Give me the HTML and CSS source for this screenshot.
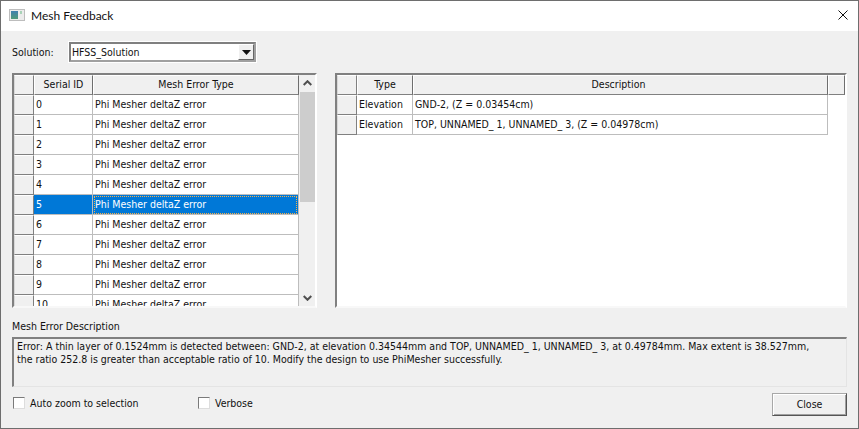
FILE: index.html
```html
<!DOCTYPE html>
<html lang="en">
<head>
<meta charset="utf-8">
<title>Mesh Feedback</title>
<link rel="stylesheet" href="styles.css">
</head>
<body>
<div class="window">
  <header class="titlebar">
    <svg class="app-icon" width="16" height="16" viewBox="0 0 16 16"><defs><linearGradient id="ig" x1="0" y1="0" x2="0" y2="1"><stop offset="0" stop-color="#3f7fb0"/><stop offset="1" stop-color="#4f9a78"/></linearGradient></defs><rect x="0.5" y="2.5" width="15" height="11" fill="#ececec" stroke="#bdbdbd"/><rect x="2" y="4" width="7" height="8" fill="url(#ig)"/><rect x="11" y="4" width="2" height="3" fill="#a9d3b8"/></svg>
    <span class="title">Mesh Feedback</span>
    <svg class="close-x" width="10" height="10" viewBox="0 0 10 10"><path d="M0.5 0.5 9.5 9.5M9.5 0.5 0.5 9.5" stroke="#111" stroke-width="1" fill="none"/></svg>
  </header>
  <main class="content">
    <div class="solution-row">
      <label class="solution-label">Solution:</label>
      <div class="combo"><span class="combo-text">HFSS_Solution</span><span class="combo-btn"><svg width="9" height="5" viewBox="0 0 9 5"><path d="M0 0H9L4.5 5Z" fill="#111"/></svg></span></div>
    </div>
    <div class="grids">
      <div class="grid-frame left-frame">
        <div class="grid-body">
          <div class="row head">
            <div class="rh"></div><div class="hc c-id">Serial ID</div><div class="hc c-type">Mesh Error Type</div>
          </div>
          <div class="row"><div class="rh"></div><div class="td c-id">0</div><div class="td c-type">Phi Mesher deltaZ error</div></div>
          <div class="row"><div class="rh"></div><div class="td c-id">1</div><div class="td c-type">Phi Mesher deltaZ error</div></div>
          <div class="row"><div class="rh"></div><div class="td c-id">2</div><div class="td c-type">Phi Mesher deltaZ error</div></div>
          <div class="row"><div class="rh"></div><div class="td c-id">3</div><div class="td c-type">Phi Mesher deltaZ error</div></div>
          <div class="row"><div class="rh"></div><div class="td c-id">4</div><div class="td c-type">Phi Mesher deltaZ error</div></div>
          <div class="row selected"><div class="rh"></div><div class="td c-id">5</div><div class="td c-type"><span class="focus">Phi Mesher deltaZ error</span></div></div>
          <div class="row"><div class="rh"></div><div class="td c-id">6</div><div class="td c-type">Phi Mesher deltaZ error</div></div>
          <div class="row"><div class="rh"></div><div class="td c-id">7</div><div class="td c-type">Phi Mesher deltaZ error</div></div>
          <div class="row"><div class="rh"></div><div class="td c-id">8</div><div class="td c-type">Phi Mesher deltaZ error</div></div>
          <div class="row"><div class="rh"></div><div class="td c-id">9</div><div class="td c-type">Phi Mesher deltaZ error</div></div>
          <div class="row"><div class="rh"></div><div class="td c-id">10</div><div class="td c-type">Phi Mesher deltaZ error</div></div>
        </div>
        <div class="scrollbar">
          <svg class="arrow" width="9" height="6" viewBox="0 0 9 6"><path d="M0.7 5 4.5 1.2 8.3 5" stroke="#505050" stroke-width="2" fill="none"/></svg>
          <div class="track"><div class="thumb"></div></div>
          <svg class="arrow" width="9" height="6" viewBox="0 0 9 6"><path d="M0.7 1 4.5 4.8 8.3 1" stroke="#505050" stroke-width="2" fill="none"/></svg>
        </div>
      </div>
      <div class="grid-frame right-frame">
        <div class="grid-body">
          <div class="row head">
            <div class="rh"></div><div class="hc c-kind">Type</div><div class="hc c-desc head-desc">Description</div><div class="hc c-end"></div>
          </div>
          <div class="row"><div class="rh"></div><div class="td c-kind">Elevation</div><div class="td c-desc">GND-2, (Z = 0.03454cm)</div></div>
          <div class="row"><div class="rh"></div><div class="td c-kind">Elevation</div><div class="td c-desc">TOP, UNNAMED_ 1, UNNAMED_ 3, (Z = 0.04978cm)</div></div>
        </div>
      </div>
    </div>
    <div class="desc-label">Mesh Error Description</div>
    <div class="desc-box">Error: A thin layer of 0.1524mm is detected between: GND-2, at elevation 0.34544mm and TOP, UNNAMED_ 1, UNNAMED_ 3, at 0.49784mm. Max extent is 38.527mm,<br>the ratio 252.8 is greater than acceptable ratio of 10. Modify the design to use PhiMesher successfully.</div>
    <div class="footer">
      <div class="check check-auto"><span class="box"></span><span>Auto zoom to selection</span></div>
      <div class="check"><span class="box"></span><span>Verbose</span></div>
      <button class="close-btn" type="button">Close</button>
    </div>
  </main>
</div>
</body>
</html>
```

FILE: styles.css
```css
* { box-sizing: border-box; }
html, body { margin: 0; padding: 0; }
body {
  width: 859px;
  height: 429px;
  overflow: hidden;
  font-family: "DejaVu Sans Condensed", "DejaVu Sans", sans-serif;
  font-stretch: condensed;
  font-size: 10.5px;
  color: #111;
}
.window {
  width: 859px;
  height: 429px;
  border: 1px solid #6e6e6e;
  display: flex;
  flex-direction: column;
  background: #f0f0f0;
}
.titlebar {
  height: 30px;
  flex: none;
  background: #fff;
  display: flex;
  align-items: center;
  padding: 0 10px 2px 8px;
}
.app-icon { flex: none; margin-right: 6px; }
.title { font-family: "Lato", "Noto Sans", sans-serif; font-stretch: normal; font-size: 12px; flex: 1; padding-top: 1px; }
.content {
  flex: 1;
  padding: 11px 11px 0 11px;
  display: flex;
  flex-direction: column;
  min-height: 0;
}
.solution-row { display: flex; align-items: center; height: 20px; }
.solution-label { width: 57px; }
.combo {
  width: 187px;
  height: 20px;
  background: #fff;
  border: 2px solid;
  border-color: #808080 #a0a0a0 #a0a0a0 #808080;
  outline: 1px solid #fff;
  display: flex;
  align-items: center;
  padding-left: 1px;
}
.combo-text { flex: 1; }
.combo-btn {
  width: 16px;
  height: 16px;
  background: #f0f0f0;
  border: 1px solid;
  border-color: #fff #666 #666 #fff;
  display: flex;
  align-items: center;
  justify-content: center;
}
.grids { display: flex; gap: 18px; margin-top: 11px; height: 235px; }
.grid-frame {
  background: #fff;
  border: 2px solid;
  border-color: #808080 #fff #f8f8f8 #808080;
  display: flex;
  overflow: hidden;
}
.left-frame { width: 305px; }
.right-frame { width: 512px; }
.grid-body { flex: 1; min-width: 0; height: 233px; overflow: hidden; }
.row { display: flex; height: 20px; }
.rh {
  width: 20px;
  flex: none;
  background: #f0f0f0;
  border: 1px solid;
  border-color: #fff #808080 #808080 #fff;
  border-left: 1px solid #d8d8d8;
}
.hc {
  background: #f0f0f0;
  border: 1px solid;
  border-color: #fff #6e6e6e #808080 #fff;
  text-align: center;
  line-height: 17px;
  white-space: nowrap;
  overflow: hidden;
}
.head-desc { padding-right: 4px; }
.td {
  background: #fff;
  border-right: 1px solid #bdbdbd;
  border-bottom: 1px solid #bdbdbd;
  padding: 0 2px 0 2px;
  line-height: 19px;
  white-space: nowrap;
  overflow: hidden;
}
.c-id { width: 59px; flex: none; }
.c-type { width: 206px; flex: none; }
.c-kind { width: 56px; flex: none; }
.c-desc { width: 415px; flex: none; }
.c-end { width: 17px; flex: none; }
.row.selected .td {
  background: #0078d7;
  color: #fff;
}
.row.selected .c-type { padding: 1px; line-height: 17px; }
.focus {
  display: block;
  height: 18px;
  outline: 1px dotted #f5b04a;
  outline-offset: -1px;
  padding-left: 1px;
}
.scrollbar {
  width: 16px;
  flex: none;
  background: #f0f0f0;
  display: flex;
  flex-direction: column;
  align-items: center;
  height: 100%;
  padding: 5px 0;
  border-left: 1px solid #f0f0f0;
}
.track { flex: 1; width: 15px; margin: 7px 0; }
.thumb { height: 110px; margin-top: -1px; background: #cdcdcd; }
.arrow { flex: none; }
.desc-label { margin-top: 11px; line-height: 15px; height: 15px; }
.desc-box {
  margin-top: 3px;
  height: 50px;
  background: #f0f0f0;
  border: 1px solid;
  border-top: 2px solid #808080;
  border-left: 2px solid #808080;
  border-right-color: #e4e4e4;
  border-bottom-color: #e4e4e4;
  padding: 1px 3px 0;
  line-height: 13px;
  white-space: nowrap;
}
.footer { display: flex; align-items: flex-start; margin-top: 6px; }
.check { display: flex; align-items: center; gap: 5px; height: 20px; }
.check-auto { width: 185px; margin-left: 1px; }
.box {
  width: 12px;
  height: 12px;
  background: #fff;
  border: 1px solid #7a7a7a;
  border-right-color: #ddd;
  border-bottom-color: #ddd;
  display: block;
}
.close-btn {
  margin-left: auto;
  width: 75px;
  height: 23px;
  background: #f0f0f0;
  border: 1px solid;
  border-color: #a8a8a8 #555 #555 #a8a8a8;
  box-shadow: inset 1px 1px 0 #fff, inset -1px -1px 0 #a0a0a0;
  font: inherit;
  color: #111;
  padding: 0 0 2px;
}
```
